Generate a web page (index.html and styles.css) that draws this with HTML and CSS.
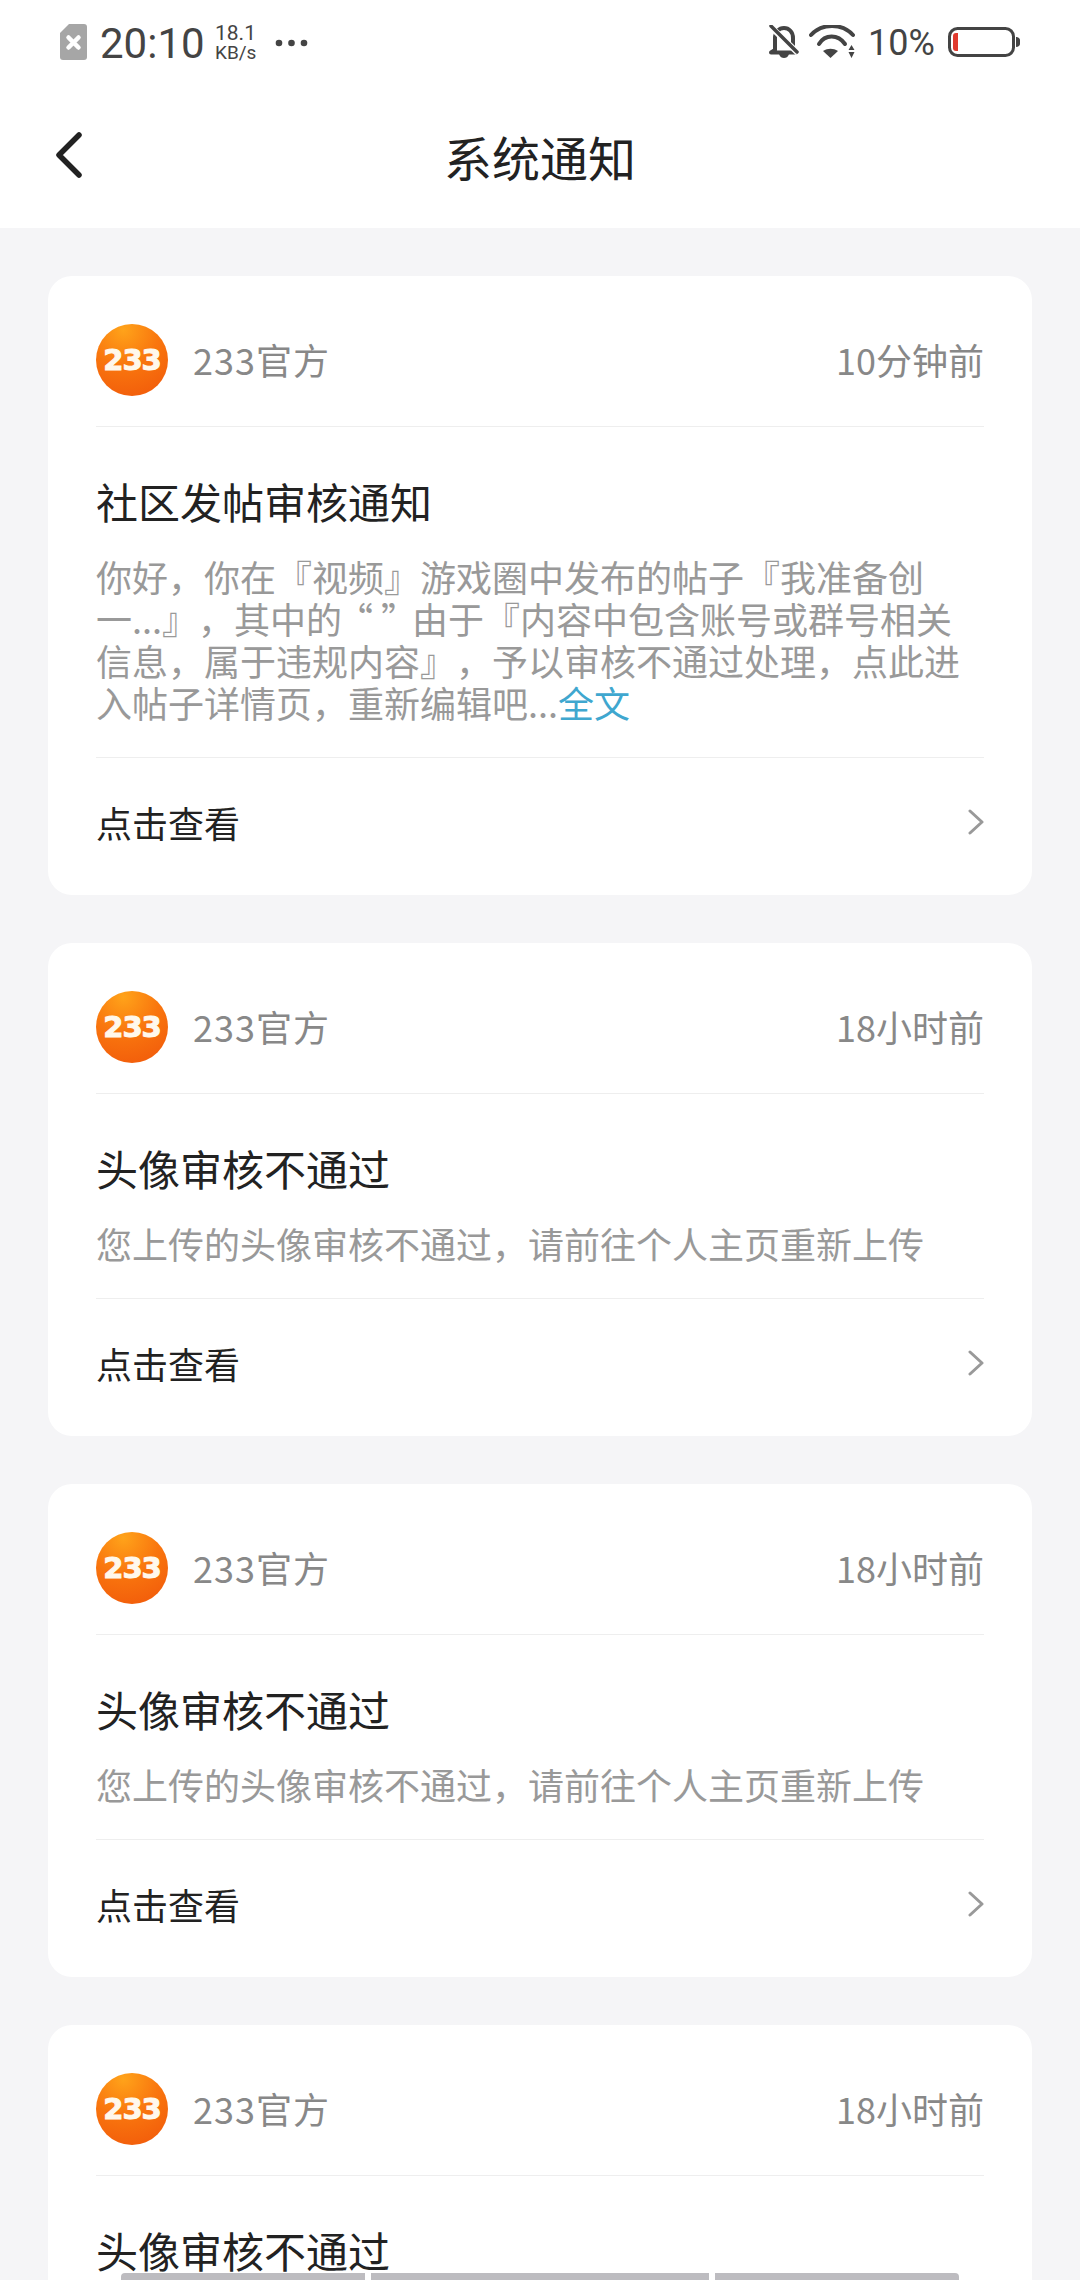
FILE: index.html
```html
<!DOCTYPE html>
<html lang="zh-CN">
<head>
<meta charset="utf-8">
<title>系统通知</title>
<link rel="stylesheet" href="styles.css">
</head>
<body>
<div class="page">
  <header class="top">
    <div class="status">
      <div class="status-left">
        <svg class="sim" viewBox="0 0 27 36"><path d="M9 0H24a3 3 0 0 1 3 3V33a3 3 0 0 1-3 3H3a3 3 0 0 1-3-3V9z" fill="#a6a6a6"/><path d="M8.500 13.500l10 10M18.500 13.500l-10 10" stroke="#fff" stroke-width="4.500" stroke-linecap="round"/></svg>
        <span class="clock">20:10</span>
        <span class="speed"><span class="speed-num">18.1</span><span class="speed-unit">KB/s</span></span>
        <svg class="dots" viewBox="0 0 33 8"><circle cx="4" cy="4" r="3.300"/><circle cx="16.500" cy="4" r="3.300"/><circle cx="29" cy="4" r="3.300"/></svg>
      </div>
      <div class="status-right">
        <svg class="bell" viewBox="0 0 32 34"><path d="M7 25V13C7 7 11 3 16 3s9 4 9 10v12l3 2.500H3z" fill="none" stroke="#444" stroke-width="4" stroke-linejoin="round"/><path d="M11 29c1 3 3 4 5 4s4-1 5-4z" fill="#444"/><path d="M3 2L30 28" stroke="#fff" stroke-width="6"/><path d="M3 1L29 27" stroke="#444" stroke-width="3.500" stroke-linecap="round"/></svg>
        <svg class="wifi" viewBox="0 0 46 34"><path d="M2 10C13 -2 33 -2 44 10" fill="none" stroke="#444" stroke-width="4" stroke-linecap="round"/><path d="M10 19C16 9 29 9 36 19" fill="none" stroke="#444" stroke-width="4" stroke-linecap="round"/><path d="M14 26c5-3 10-3 15 0l-7.500 7z" fill="#444"/><path d="M39.500 25l3-5 3 5zM39.500 27l3 6 3-6z" fill="#444"/></svg>
        <span class="percent">10%</span>
        <svg class="battery" viewBox="0 0 72 30"><rect x="1.500" y="1.500" width="64" height="27" rx="8" fill="#fff" stroke="#444" stroke-width="3"/><path d="M10 6v18H8a3 3 0 0 1-3-3V9a3 3 0 0 1 3-3z" fill="#e03a2e"/><path d="M68 10c2.500 0 4 1.500 4 3v4c0 1.500-1.500 3-4 3z" fill="#444"/></svg>
      </div>
    </div>
    <nav class="nav">
      <svg class="back" viewBox="0 0 28 50"><path d="M24 5L4 25l20 20" fill="none" stroke="#222" stroke-width="5.500" stroke-linecap="round" stroke-linejoin="round" /></svg>
      <h1 class="nav-title">系统通知</h1>
      <span class="nav-side"></span>
    </nav>
  </header>

  <main class="list">
    <article class="card">
      <div class="card-head">
        <span class="avatar"><span class="avatar-text">233</span></span>
        <span class="sender">233官方</span>
        <span class="time">10分钟前</span>
      </div>
      <div class="card-body">
        <h2 class="card-title">社区发帖审核通知</h2>
        <p class="card-text">你好，你在『视频』游戏圈中发布的帖子『我准备创<br>一...』，其中的<span class="quotes">“ ”</span>由于『内容中包含账号或群号相关<br>信息，属于违规内容』，予以审核不通过处理，点此进<br>入帖子详情页，重新编辑吧...<span class="more">全文</span></p>
      </div>
      <div class="card-foot">
        <span>点击查看</span>
        <svg class="chev" viewBox="0 0 16 26"><path d="M2 2l12 11L2 24" fill="none" stroke="#999" stroke-width="3" stroke-linecap="round" stroke-linejoin="round"/></svg>
      </div>
    </article>

    <article class="card">
      <div class="card-head">
        <span class="avatar"><span class="avatar-text">233</span></span>
        <span class="sender">233官方</span>
        <span class="time">18小时前</span>
      </div>
      <div class="card-body">
        <h2 class="card-title">头像审核不通过</h2>
        <p class="card-text">您上传的头像审核不通过，请前往个人主页重新上传</p>
      </div>
      <div class="card-foot">
        <span>点击查看</span>
        <svg class="chev" viewBox="0 0 16 26"><path d="M2 2l12 11L2 24" fill="none" stroke="#999" stroke-width="3" stroke-linecap="round" stroke-linejoin="round"/></svg>
      </div>
    </article>

    <article class="card">
      <div class="card-head">
        <span class="avatar"><span class="avatar-text">233</span></span>
        <span class="sender">233官方</span>
        <span class="time">18小时前</span>
      </div>
      <div class="card-body">
        <h2 class="card-title">头像审核不通过</h2>
        <p class="card-text">您上传的头像审核不通过，请前往个人主页重新上传</p>
      </div>
      <div class="card-foot">
        <span>点击查看</span>
        <svg class="chev" viewBox="0 0 16 26"><path d="M2 2l12 11L2 24" fill="none" stroke="#999" stroke-width="3" stroke-linecap="round" stroke-linejoin="round"/></svg>
      </div>
    </article>

    <article class="card">
      <div class="card-head">
        <span class="avatar"><span class="avatar-text">233</span></span>
        <span class="sender">233官方</span>
        <span class="time">18小时前</span>
      </div>
      <div class="card-body">
        <h2 class="card-title">头像审核不通过</h2>
        <p class="card-text">您上传的头像审核不通过，请前往个人主页重新上传</p>
      </div>
      <div class="card-foot">
        <span>点击查看</span>
        <svg class="chev" viewBox="0 0 16 26"><path d="M2 2l12 11L2 24" fill="none" stroke="#999" stroke-width="3" stroke-linecap="round" stroke-linejoin="round"/></svg>
      </div>
    </article>
  </main>

  <div class="gesture">
    <span class="gesture-bar g1"></span>
    <span class="gesture-bar g2"></span>
    <span class="gesture-bar g3"></span>
  </div>
</div>
</body>
</html>
```
FILE: styles.css
```css
* { box-sizing: border-box; }
html, body { margin: 0; padding: 0; }
body {
  font-family: "Noto Sans CJK SC", "Roboto", sans-serif;
  background: #f5f5f7;
  text-spacing-trim: space-all;
}
.page {
  position: relative;
  width: 1080px;
  height: 2280px;
  overflow: hidden;
  background: #f5f5f7;
}
.top { background: #fff; height: 228px; }

.status {
  height: 84px;
  padding: 0 60px 0 60px;
  display: flex;
  align-items: center;
  justify-content: space-between;
  color: #444;
  font-family: "Roboto", sans-serif;
}
.status-left, .status-right { display: flex; align-items: center; }
.sim { width: 27px; height: 36px; }
.clock { font-size: 42px; line-height: 44px; margin-left: 13px; width: 102px; padding-top: 3px; }
.speed { display: flex; flex-direction: column; margin-left: 13px; width: 42px; padding-top: 1px; }
.speed-num { font-size: 21px; line-height: 20px; }
.speed-unit { font-size: 19px; line-height: 19px; }
.dots { width: 33px; height: 8px; margin-left: 18px; margin-top: 1px; fill: #444; }
.bell { width: 32px; height: 34px; }
.wifi { width: 46px; height: 34px; margin-left: 9px; }
.percent { font-size: 36px; line-height: 40px; margin-left: 13px; width: 68px; padding-top: 1px; }
.battery { width: 72px; height: 30px; margin-left: 12px; }

.nav {
  height: 144px;
  padding: 0 55px;
  display: grid;
  grid-template-columns: 100px 1fr 100px;
  align-items: center;
}
.back { width: 28px; height: 50px; margin-bottom: 2px; }
.nav-title {
  margin: 0;
  text-align: center;
  font-size: 48px;
  line-height: 60px;
  font-weight: 400;
  color: #222;
}

.list {
  padding: 48px 48px 0;
  display: flex;
  flex-direction: column;
  gap: 48px;
}
.card {
  background: #fff;
  border-radius: 24px;
  padding: 0 48px;
  flex: none;
}
.card-head {
  display: flex;
  align-items: center;
  padding: 48px 0 30px;
  border-bottom: 1px solid #eee;
}
.avatar {
  width: 72px;
  height: 72px;
  border-radius: 50%;
  background: radial-gradient(circle at 38% 8%, #ffa31a 0%, #f9760e 45%, #f0560a 100%);
  display: flex;
  align-items: center;
  justify-content: center;
  flex: none;
}
.avatar-text {
  font-family: "DejaVu Sans", sans-serif;
  font-weight: 700;
  font-size: 29px;
  line-height: 30px;
  color: #fff8ec;
  letter-spacing: -1px;
  -webkit-text-stroke: 1px #fff8ec;
}
.sender { margin: 0 0 3px 25px; font-size: 36px; line-height: 48px; color: #888; letter-spacing: 1px; }
.time { margin: 0 0 3px auto; font-size: 36px; line-height: 48px; color: #888; }

.card-body { padding: 44px 0 34px; border-bottom: 1px solid #eee; }
.card-title {
  margin: 0 0 24px;
  font-size: 42px;
  line-height: 60px;
  font-weight: 400;
  color: #222;
}
.card-text {
  margin: 0;
  font-size: 36px;
  line-height: 42px;
  color: #999;
  white-space: nowrap;
}
.quotes { margin: 0 -5px; }
.more { color: #3fa7cf; }

.card-foot {
  height: 137px;
  padding-bottom: 10px;
  display: flex;
  align-items: center;
  justify-content: space-between;
  font-size: 36px;
  color: #222;
}
.chev { width: 16px; height: 26px; margin-right: 0; }

.gesture {
  position: absolute;
  left: 121px;
  bottom: 0;
  display: flex;
  gap: 6px;
  height: 7px;
}
.gesture-bar { display: block; background: #bdbcc0; height: 7px; }
.g1 { width: 244px; border-radius: 4px 0 0 0; }
.g2 { width: 338px; }
.g3 { width: 244px; border-radius: 0 4px 0 0; }
```
